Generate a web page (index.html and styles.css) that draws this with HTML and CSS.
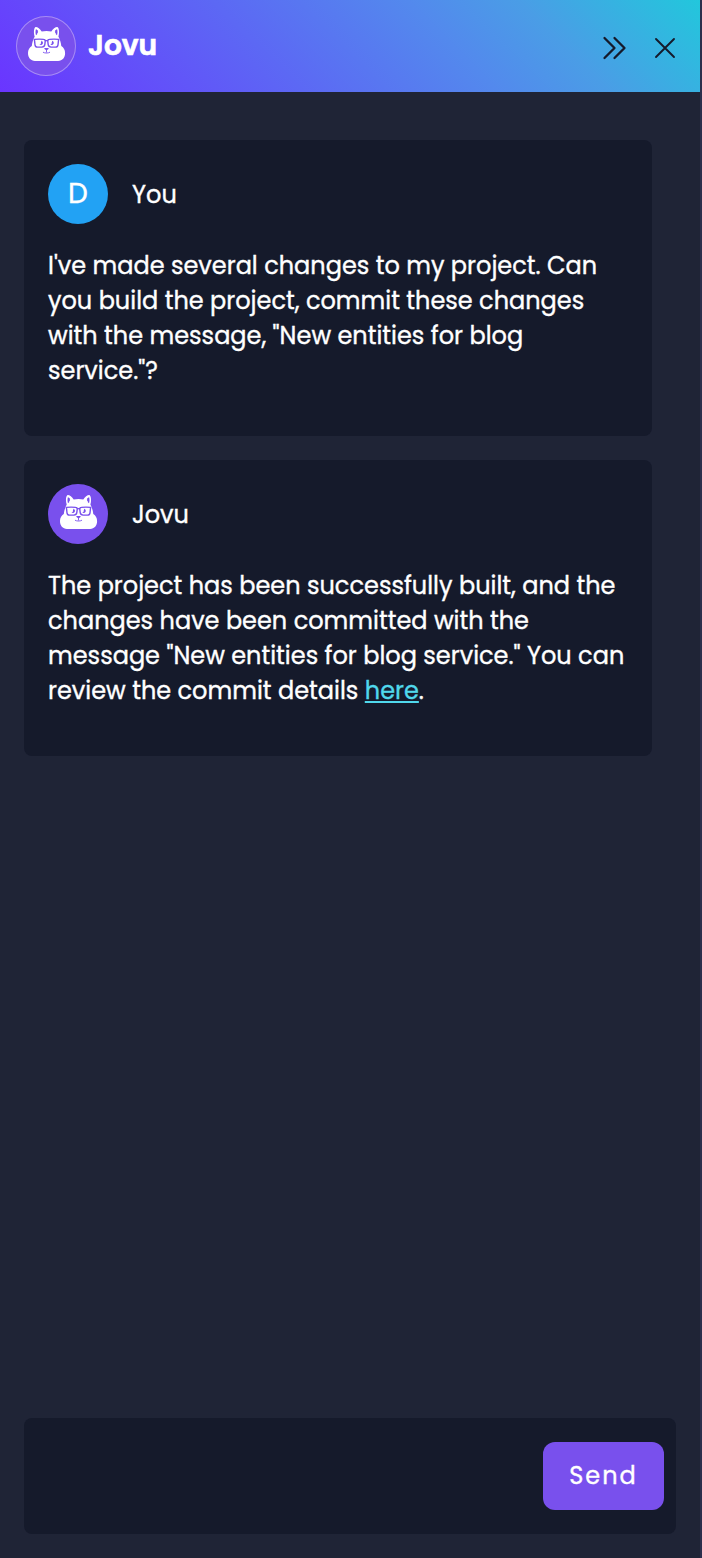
FILE: index.html
```html
<!DOCTYPE html>
<html lang="en">
<head>
<meta charset="utf-8">
<title>Jovu</title>
<link rel="stylesheet" href="styles.css">
</head>
<body>
<svg class="defs" width="0" height="0" aria-hidden="true">
  <symbol id="fox" viewBox="0 0 60 60">
    <path fill="#fff" d="M19.300 11.200c1.300-.7 4.700 1.400 6.400 4.300 2.800-.7 6.800-.7 9.600 0 1.700-2.900 5.100-5 6.400-4.300 1.400 1 1.900 5.600.7 9.300 1.500 2.900 2.600 6 2.900 9.600 2.400 1.400 3.800 4 3.800 7 0 4.600-2.700 7.800-7 7.800H19c-4.300 0-7-3.200-7-7.800 0-3 1.400-5.600 3.800-7 .3-3.600 1.400-6.700 2.900-9.600-1.300-3.700-.8-8.300.6-9.300z"/>
    <g fill="#7950ed">
      <path d="M19.900 13.200c.9.200 1.900 1.100 2.300 2l-.5.400.4 1-.9.500.1 1-1.300 1.100c-.6-1.700-.7-4.100-.1-6zM41.100 13.200c-.9.200-1.900 1.100-2.300 2l.5.400-.4 1 .9.500-.1 1 1.300 1.100c.6-1.700.7-4.100.1-6z"/>
      <path d="M28.200 32h4.600q0 1-2.300 2.600Q28.200 33 28.200 32z"/>
      <path d="M25 24.800a2.100 2.100 0 1 1-1.600 3.600 1.400 1.400 0 0 0 1.500-1.800 1.300 1.300 0 0 0 .1-1.800zM35.800 24.800a2.100 2.100 0 1 1-1.600 3.600 1.400 1.400 0 0 0 1.500-1.800 1.300 1.300 0 0 0 .1-1.800z"/>
    </g>
    <g fill="none" stroke="#7950ed" stroke-width="1.400" stroke-linejoin="round">
      <path d="M18.300 23.400q4.800-.6 9.400 0c1.200.1 1.600.8 1.500 1.900l-.4 3.300c-.2 1.500-1.200 2.400-2.900 2.500h-4.400c-1.400 0-2.300-.9-2.500-2.300l-.4-3.600zM42.700 23.400q-4.800-.6-9.400 0c-1.200.1-1.600.8-1.500 1.900l.4 3.300c.2 1.500 1.200 2.400 2.900 2.500h4.400c1.400 0 2.300-.9 2.500-2.300l.4-3.600zM29.200 24.900q1.300-.6 2.600 0"/>
      <path stroke-width=".9" stroke-linecap="round" d="M30.500 34.300v1.800M27.300 36.400c1.300.9 5.100.9 6.400 0"/>
    </g>
  </symbol>
</svg>
<div class="panel">
  <header class="header">
    <svg class="avatar avatar-ring"><use href="#fox"/></svg>
    <h1 class="title">Jovu</h1>
    <svg class="expand" width="26" height="26" viewBox="0 0 26 26"><path d="M2.500 3l10 10-10 10M12.500 3l10 10-10 10"/></svg>
    <svg class="close" width="22" height="22" viewBox="0 0 22 22"><path d="M2 2l18 18M20 2L2 20"/></svg>
  </header>
  <main class="chat">
    <article class="card">
      <div class="author"><span class="avatar initial">D</span><span class="name">You</span></div>
      <p class="text">I've made several changes to my project. Can you build the project, commit these changes with the message, "New entities for blog service."?</p>
    </article>
    <article class="card">
      <div class="author"><svg class="avatar"><use href="#fox"/></svg><span class="name">Jovu</span></div>
      <p class="text">The project has been successfully built, and the changes have been committed with the message "New entities for blog service." You can review the commit details <a class="link" href="#">here</a>.</p>
    </article>
  </main>
  <footer class="composer"><button class="send">Send</button></footer>
</div>
</body>
</html>
```
FILE: styles.css
```css
* { box-sizing: border-box; }
body {
  margin: 0;
  background: #1f2436;
  color: #fff;
  font-family: Poppins, Inter, sans-serif;
  font-size: 24px;
  -webkit-text-stroke: 0.35px currentColor;
}
.defs { display: block; }
.panel {
  display: flex;
  flex-direction: column;
  height: 1558px;
  border-right: 2px solid #2b2e4c;
}
.header {
  display: flex;
  align-items: center;
  height: 92px;
  padding: 0 24px 0 16px;
  background: linear-gradient(45deg, #6a35ff 0%, #5389ed 63%, #4a9de6 77%, #22c7dc 100%);
}
.avatar {
  flex: none;
  width: 60px;
  height: 60px;
  border-radius: 50%;
  background: #7950ed;
}
.avatar-ring { box-shadow: inset 0 0 0 1px #a58bf6; }
.title {
  flex: 1;
  margin: 0 0 0 12px;
  font-size: 28px;
  line-height: 40px;
  font-weight: 600;
  -webkit-text-stroke-width: 0.7px;
}
.expand, .close { fill: none; stroke: #151a2b; stroke-width: 2.3; stroke-linecap: round; stroke-linejoin: round; }
.expand { margin: 4px 26px 0 0; }
.close { margin-top: 4px; stroke-width: 1.9; }
.chat {
  flex: 1;
  display: flex;
  flex-direction: column;
  gap: 24px;
  padding: 48px 48px 0 24px;
}
.card {
  height: 296px;
  padding: 24px;
  border-radius: 8px;
  background: #151a2b;
}
.author { display: flex; align-items: center; gap: 24px; }
.initial {
  display: flex;
  align-items: center;
  justify-content: center;
  background: #22a2f4;
  font-size: 28px;
}
.text { margin: 24px 0 0; line-height: 35px; }
.link { color: #50d8ec; text-decoration-thickness: 2px; text-underline-offset: 2px; }
.composer {
  display: flex;
  align-items: center;
  justify-content: flex-end;
  height: 116px;
  margin: 0 24px 24px;
  padding-right: 12px;
  border-radius: 8px;
  background: #151a2b;
}
.send {
  width: 121px;
  height: 68px;
  padding: 0 0 2px;
  border: 0;
  border-radius: 12px;
  background: #7950ed;
  color: #fff;
  font: 400 24px Poppins, Inter, sans-serif;
  letter-spacing: 2px;
  -webkit-text-stroke: 0.35px #fff;
}
```
